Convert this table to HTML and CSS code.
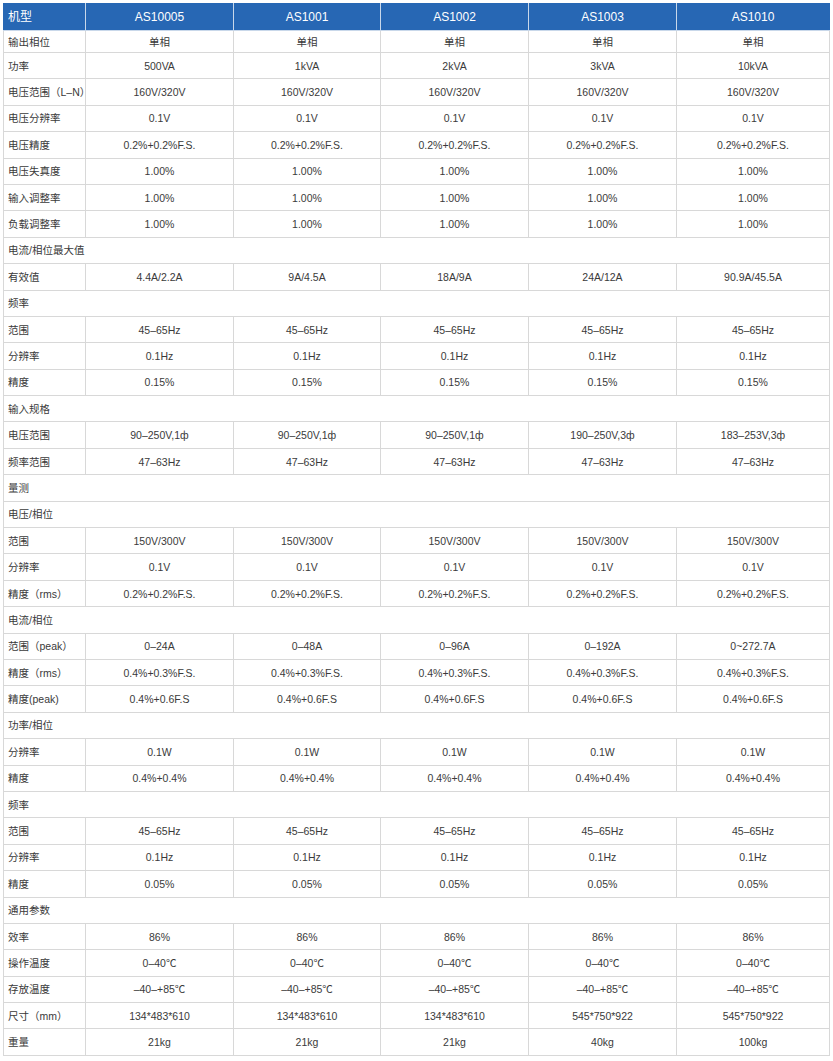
FILE: index.html
```html
<!DOCTYPE html>
<html lang="zh-CN">
<head>
<meta charset="utf-8">
<title>AS1000 系列规格</title>
<link rel="stylesheet" href="styles.css">
</head>
<body>
<table class="spec">
  <colgroup>
    <col class="c-label"><col class="c-val"><col class="c-val2"><col class="c-val"><col class="c-val"><col class="c-last">
  </colgroup>
  <thead>
    <tr class="head"><th class="label">机型</th><th>AS10005</th><th>AS1001</th><th>AS1002</th><th>AS1003</th><th>AS1010</th></tr>
  </thead>
  <tbody>
    <tr class="first"><td class="label">输出相位</td><td>单相</td><td>单相</td><td>单相</td><td>单相</td><td>单相</td></tr>
    <tr><td class="label">功率</td><td>500VA</td><td>1kVA</td><td>2kVA</td><td>3kVA</td><td>10kVA</td></tr>
    <tr><td class="label">电压范围（L–N）</td><td>160V/320V</td><td>160V/320V</td><td>160V/320V</td><td>160V/320V</td><td>160V/320V</td></tr>
    <tr><td class="label">电压分辨率</td><td>0.1V</td><td>0.1V</td><td>0.1V</td><td>0.1V</td><td>0.1V</td></tr>
    <tr><td class="label">电压精度</td><td>0.2%+0.2%F.S.</td><td>0.2%+0.2%F.S.</td><td>0.2%+0.2%F.S.</td><td>0.2%+0.2%F.S.</td><td>0.2%+0.2%F.S.</td></tr>
    <tr><td class="label">电压失真度</td><td>1.00%</td><td>1.00%</td><td>1.00%</td><td>1.00%</td><td>1.00%</td></tr>
    <tr><td class="label">输入调整率</td><td>1.00%</td><td>1.00%</td><td>1.00%</td><td>1.00%</td><td>1.00%</td></tr>
    <tr><td class="label">负载调整率</td><td>1.00%</td><td>1.00%</td><td>1.00%</td><td>1.00%</td><td>1.00%</td></tr>
    <tr class="section"><td colspan="6">电流/相位最大值</td></tr>
    <tr><td class="label">有效值</td><td>4.4A/2.2A</td><td>9A/4.5A</td><td>18A/9A</td><td>24A/12A</td><td>90.9A/45.5A</td></tr>
    <tr class="section"><td colspan="6">频率</td></tr>
    <tr><td class="label">范围</td><td>45–65Hz</td><td>45–65Hz</td><td>45–65Hz</td><td>45–65Hz</td><td>45–65Hz</td></tr>
    <tr><td class="label">分辨率</td><td>0.1Hz</td><td>0.1Hz</td><td>0.1Hz</td><td>0.1Hz</td><td>0.1Hz</td></tr>
    <tr><td class="label">精度</td><td>0.15%</td><td>0.15%</td><td>0.15%</td><td>0.15%</td><td>0.15%</td></tr>
    <tr class="section"><td colspan="6">输入规格</td></tr>
    <tr><td class="label">电压范围</td><td>90–250V,1ф</td><td>90–250V,1ф</td><td>90–250V,1ф</td><td>190–250V,3ф</td><td>183–253V,3ф</td></tr>
    <tr><td class="label">频率范围</td><td>47–63Hz</td><td>47–63Hz</td><td>47–63Hz</td><td>47–63Hz</td><td>47–63Hz</td></tr>
    <tr class="section"><td colspan="6">量测</td></tr>
    <tr class="section"><td colspan="6">电压/相位</td></tr>
    <tr><td class="label">范围</td><td>150V/300V</td><td>150V/300V</td><td>150V/300V</td><td>150V/300V</td><td>150V/300V</td></tr>
    <tr><td class="label">分辨率</td><td>0.1V</td><td>0.1V</td><td>0.1V</td><td>0.1V</td><td>0.1V</td></tr>
    <tr><td class="label">精度（rms）</td><td>0.2%+0.2%F.S.</td><td>0.2%+0.2%F.S.</td><td>0.2%+0.2%F.S.</td><td>0.2%+0.2%F.S.</td><td>0.2%+0.2%F.S.</td></tr>
    <tr class="section"><td colspan="6">电流/相位</td></tr>
    <tr><td class="label">范围（peak）</td><td>0–24A</td><td>0–48A</td><td>0–96A</td><td>0–192A</td><td>0~272.7A</td></tr>
    <tr><td class="label">精度（rms）</td><td>0.4%+0.3%F.S.</td><td>0.4%+0.3%F.S.</td><td>0.4%+0.3%F.S.</td><td>0.4%+0.3%F.S.</td><td>0.4%+0.3%F.S.</td></tr>
    <tr><td class="label">精度(peak)</td><td>0.4%+0.6F.S</td><td>0.4%+0.6F.S</td><td>0.4%+0.6F.S</td><td>0.4%+0.6F.S</td><td>0.4%+0.6F.S</td></tr>
    <tr class="section"><td colspan="6">功率/相位</td></tr>
    <tr><td class="label">分辨率</td><td>0.1W</td><td>0.1W</td><td>0.1W</td><td>0.1W</td><td>0.1W</td></tr>
    <tr><td class="label">精度</td><td>0.4%+0.4%</td><td>0.4%+0.4%</td><td>0.4%+0.4%</td><td>0.4%+0.4%</td><td>0.4%+0.4%</td></tr>
    <tr class="section"><td colspan="6">频率</td></tr>
    <tr><td class="label">范围</td><td>45–65Hz</td><td>45–65Hz</td><td>45–65Hz</td><td>45–65Hz</td><td>45–65Hz</td></tr>
    <tr><td class="label">分辨率</td><td>0.1Hz</td><td>0.1Hz</td><td>0.1Hz</td><td>0.1Hz</td><td>0.1Hz</td></tr>
    <tr><td class="label">精度</td><td>0.05%</td><td>0.05%</td><td>0.05%</td><td>0.05%</td><td>0.05%</td></tr>
    <tr class="section"><td colspan="6">通用参数</td></tr>
    <tr><td class="label">效率</td><td>86%</td><td>86%</td><td>86%</td><td>86%</td><td>86%</td></tr>
    <tr><td class="label">操作温度</td><td>0–40℃</td><td>0–40℃</td><td>0–40℃</td><td>0–40℃</td><td>0–40℃</td></tr>
    <tr><td class="label">存放温度</td><td>–40–+85℃</td><td>–40–+85℃</td><td>–40–+85℃</td><td>–40–+85℃</td><td>–40–+85℃</td></tr>
    <tr><td class="label">尺寸（mm）</td><td>134*483*610</td><td>134*483*610</td><td>134*483*610</td><td>545*750*922</td><td>545*750*922</td></tr>
    <tr><td class="label">重量</td><td>21kg</td><td>21kg</td><td>21kg</td><td>40kg</td><td>100kg</td></tr>
  </tbody>
</table>
</body>
</html>
```
FILE: styles.css
```css
html, body {
  margin: 0;
  padding: 0;
  background: #ffffff;
}
body {
  padding: 3px 0 0 3px;
  font-family: "Liberation Sans", "Noto Sans CJK SC", Arial, sans-serif;
  color: #3a3a3a;
}
.spec {
  border-collapse: collapse;
  table-layout: fixed;
  width: 826px;
  font-size: 10.5px;
}
.c-label { width: 82px; }
.c-val { width: 148px; }
.c-val2 { width: 147px; }
.c-last { width: 153px; }

.spec th,
.spec td {
  border: 1px solid #d8d8d8;
  padding: 0 4px;
  text-align: center;
  vertical-align: middle;
  white-space: nowrap;
  line-height: 14px;
}
.spec tr { height: 26.4px; }
.spec tr.first { height: 22px; }
.spec tr.head { height: 27px; }

.spec th {
  background: #2767b4;
  color: #ffffff;
  font-weight: normal;
  font-size: 12px;
  border-color: #c9d8ea;
  border-top-color: #2767b4;
}
.spec th:first-child { border-left-color: #2767b4; }
.spec th:last-child { border-right-color: #2767b4; }

.spec .label,
.spec .section td {
  text-align: left;
}
```
